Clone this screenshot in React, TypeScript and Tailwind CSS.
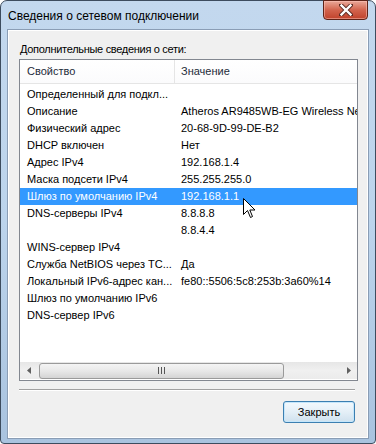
import React from "react";

const rows: [string, string][] = [
  ["Определенный для подкл...", ""],
  ["Описание", "Atheros AR9485WB-EG Wireless Network Adapter"],
  ["Физический адрес", "20-68-9D-99-DE-B2"],
  ["DHCP включен", "Нет"],
  ["Адрес IPv4", "192.168.1.4"],
  ["Маска подсети IPv4", "255.255.255.0"],
  ["Шлюз по умолчанию IPv4", "192.168.1.1"],
  ["DNS-серверы IPv4", "8.8.8.8"],
  ["", "8.8.4.4"],
  ["WINS-сервер IPv4", ""],
  ["Служба NetBIOS через TC...", "Да"],
  ["Локальный IPv6-адрес кан...", "fe80::5506:5c8:253b:3a60%14"],
  ["Шлюз по умолчанию IPv6", ""],
  ["DNS-сервер IPv6", ""],
];

export default function App() {
  const font = { fontFamily: '"Liberation Sans", Arial, sans-serif' };
  return (
    <div className="w-[376px] h-[444px] bg-white" style={font}>
      <div className="relative w-[376px] h-[444px] rounded-t-[7px] rounded-b-[4px] border border-[#3d4c5e] bg-gradient-to-b from-[#c3d8ee] via-[#bcd4ec] to-[#a9c3df] flex flex-col px-[6px] pb-[4px]">
        {/* title bar */}
        <div className="h-[28px] flex items-start justify-between shrink-0">
          <div className="pl-[1px] pt-[8px] text-[12px] text-black leading-[14px]">
            Сведения о сетевом подключении
          </div>
          <div className="mr-[1px] mt-[-1px] w-[45px] h-[20px] rounded-b-[4px] border border-[#5e2318] bg-gradient-to-b from-[#e9a899] via-[#d2634d] to-[#c0422b] flex items-center justify-center shadow-[inset_0_0_0_1px_rgba(255,200,190,0.5)]">
            <svg width="14" height="12" viewBox="0 0 14 12">
              <path d="M2 1 L12 11 M12 1 L2 11" stroke="#5a2a22" strokeWidth="4.2" strokeLinecap="square" />
              <path d="M2.5 1.5 L11.5 10.5 M11.5 1.5 L2.5 10.5" stroke="#ffffff" strokeWidth="2.4" strokeLinecap="square" />
            </svg>
          </div>
        </div>
        {/* client area */}
        <div className="flex-1 border border-[#8a9db5] bg-[#f0f0f0] flex flex-col px-[11px] pt-[12px] shadow-[inset_0_0_0_1px_#ffffff]">
          <div className="text-[11px] leading-[14px] text-black pl-[1px] tracking-[-0.3px]">
            Дополнительные сведения о сети:
          </div>
          <div className="mt-[3px] w-[339px] h-[322px] border border-[#828790] bg-white flex flex-col overflow-hidden relative">
            {/* header */}
            <div className="h-[24px] flex shrink-0 border-b border-[#e5e5e5] bg-gradient-to-b from-white to-[#fbfbfc] text-[11px] text-[#1e2b3a]">
              <div className="w-[155px] border-r border-[#e5e5e5] flex items-center pl-[7px]">Свойство</div>
              <div className="flex-1 flex items-center pl-[6px]">Значение</div>
            </div>
            {/* body */}
            <div className="flex-1 min-h-0 pt-[2px] text-[11px] text-black">
              {rows.map(([k, v], i) => {
                const sel = i === 6;
                return (
                  <div
                    key={i}
                    className={
                      "h-[17px] w-full flex items-center whitespace-nowrap overflow-hidden " +
                      (sel ? "bg-[#3399ff] text-white" : "")
                    }
                  >
                    <div className="w-[155px] shrink-0 pl-[7px] overflow-hidden">{k}</div>
                    <div className="flex-1 min-w-0 pl-[6px] overflow-hidden">{v}</div>
                  </div>
                );
              })}
            </div>
            {/* horizontal scrollbar */}
            <div className="h-[17px] shrink-0 flex items-center bg-gradient-to-b from-[#e6e6e6] via-[#f0f0f0] to-[#ebebeb] mb-[1px]">
              <div className="w-[17px] h-[17px] flex items-center justify-center">
                <svg width="4" height="7" viewBox="0 0 4 7"><path d="M4 0 L0 3.5 L4 7 Z" fill="#606060" /></svg>
              </div>
              <div className="ml-[2px] w-[245px] h-[16px] rounded-[3px] border border-[#9a9a9a] bg-gradient-to-b from-[#f4f4f4] via-[#e8e8e8] to-[#d4d4d4] flex items-center justify-center">
                <div className="flex gap-[2px]">
                  <div className="w-[1px] h-[7px] bg-[#555]" />
                  <div className="w-[1px] h-[7px] bg-[#555]" />
                  <div className="w-[1px] h-[7px] bg-[#555]" />
                </div>
              </div>
              <div className="flex-1" />
              <div className="w-[17px] h-[17px] flex items-center justify-center">
                <svg width="4" height="7" viewBox="0 0 4 7"><path d="M0 0 L4 3.5 L0 7 Z" fill="#606060" /></svg>
              </div>
            </div>
          </div>
          {/* separator */}
          <div className="mt-[8px] w-[336px] h-[2px] border-t border-[#a0a0a0] border-b border-b-white" />
          {/* button */}
          <div className="mt-[10px] flex justify-end pr-[2px]">
            <div className="w-[72px] h-[22px] rounded-[3px] border border-[#3c7fb1] bg-gradient-to-b from-[#f3f9fd] via-[#e4eff7] to-[#cfe1ee] shadow-[inset_0_0_0_1px_#c5e6fb] flex items-center justify-center text-[11px] text-black">
              Закрыть
            </div>
          </div>
        </div>
        {/* mouse cursor */}
        <svg className="absolute left-[242px] top-[197px]" width="13" height="21" viewBox="0 0 13 21">
          <path d="M0.5 0.5 L0.5 16.5 L4.5 12.5 L7.5 19.5 L9.5 18.5 L6.8 12 L12 12 Z" fill="#ffffff" stroke="#000000" strokeWidth="1" strokeLinejoin="miter" />
        </svg>
      </div>
    </div>
  );
}
